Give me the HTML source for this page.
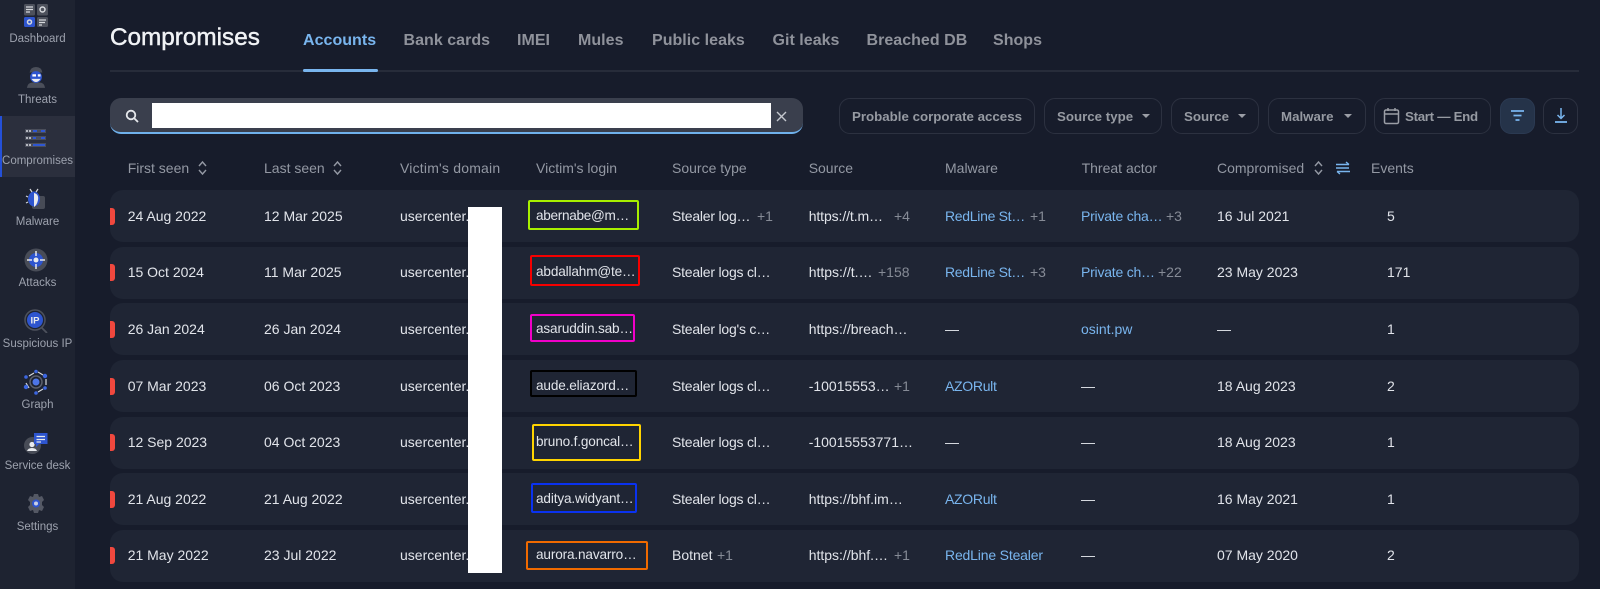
<!DOCTYPE html>
<html lang="en"><head><meta charset="utf-8"><title>Compromises</title>
<style>
*{box-sizing:border-box}
html,body{margin:0;padding:0;width:1600px;height:589px;overflow:hidden;background:#171c2b}
body{position:relative;font-family:"Liberation Sans",Arial,sans-serif;font-size:14px;color:#e1e4ea}
.a{position:absolute}
.t{position:absolute;white-space:nowrap;line-height:20px;height:20px}
#side{left:0;top:0;width:75px;height:589px;background:#1e2331}
#act{left:0;top:116px;width:75px;height:61px;background:#2b2f3d}
#actb{left:0;top:116px;width:2px;height:61px;background:#2450d8}
.l{position:absolute;left:0;width:75px;text-align:center;font-size:11.5px;line-height:14px;color:#9da2ae;white-space:nowrap}
.ic{position:absolute}
.tab{position:absolute;top:30.500px;line-height:20px;font-size:16px;font-weight:bold;letter-spacing:.03px;color:#8f929b;white-space:nowrap}
.btn{position:absolute;top:98px;height:36px;border:1px solid #2c3140;border-radius:11px}
.bt{position:absolute;top:106.500px;line-height:20px;font-size:13.3px;font-weight:bold;color:#969aa2;white-space:nowrap}
.car{position:absolute;top:114px;width:0;height:0;border-left:4px solid transparent;border-right:4px solid transparent;border-top:4px solid #9b9ea6}
.h{position:absolute;top:158px;line-height:20px;color:#9398a3;white-space:nowrap}
.row{position:absolute;left:110px;width:1469px;height:52px;background:#1f2534;border-radius:13px}
.mk{position:absolute;left:110px;width:4.5px;height:17px;background:#f0483e;border-radius:0 3px 3px 0}
.row span{position:absolute;top:15.500px;line-height:20px;white-space:nowrap}
.g{color:#868b96}.b{color:#79b5ee}
.n{letter-spacing:-.22px}.m{letter-spacing:-.3px}.li{font-size:13.600px;letter-spacing:-.15px}
.box{position:absolute;border:2.5px solid;border-radius:2px}
</style></head><body>

<div class="a" id="side"></div><div class="a" id="act"></div><div class="a" id="actb"></div>

<svg class="ic" style="left:23px;top:3px" width="26" height="25" viewBox="0 0 26 25"><rect x="1" y="1" width="11" height="11.500" rx="1.500" fill="#4d515c"/><rect x="14" y="1" width="11" height="11.500" rx="1.500" fill="#4d515c"/><rect x="1" y="14" width="11" height="10" rx="1.500" fill="#2e55cf"/><rect x="14" y="14" width="11" height="10" rx="1.500" fill="#4d515c"/><path d="M3 4h7M3 6.500h7M3 9h4M16 17h7M16 19.500h6M16 22h3" stroke="#d6d8dc" stroke-width="1.300"/><circle cx="19.500" cy="6.500" r="2.500" fill="none" stroke="#d6d8dc" stroke-width="1.500"/><circle cx="6.500" cy="19" r="2" fill="none" stroke="#d6d8dc" stroke-width="1.500"/></svg>
<div class="l" style="top:32px">Dashboard</div>

<svg class="ic" style="left:26px;top:66px" width="20" height="22" viewBox="0 0 22 24"><path d="M4 7Q5 1 11 1T18 7Z" fill="#4b4f5a"/><path d="M1 24Q2 18 7 18H15Q20 18 21 24Z" fill="#4b4f5a"/><circle cx="11" cy="12" r="6.500" fill="#2e55cf"/><path d="M6 14Q11 21 16 14Z" fill="#e8eaee"/><rect x="7" y="9" width="4" height="2.500" fill="#fff"/><rect x="13" y="9" width="3" height="2.500" fill="#fff"/></svg>
<div class="l" style="top:93px">Threats</div>

<svg class="ic" style="left:25px;top:128px" width="22" height="20" viewBox="0 0 22 20"><g fill="#4a4e5b"><rect x="0" y="1" width="21" height="4"/><rect x="0" y="8" width="21" height="4"/><rect x="0" y="15" width="21" height="4"/></g><g fill="#b4b7bf"><rect x="1" y="2" width="2" height="2"/><rect x="4" y="2" width="2" height="2"/><rect x="1" y="9" width="2" height="2"/><rect x="4" y="9" width="2" height="2"/><rect x="1" y="16" width="2" height="2"/><rect x="4" y="16" width="2" height="2"/></g><g fill="#2f57d2"><rect x="8" y="2" width="4" height="2"/><rect x="16" y="2" width="4" height="2"/><rect x="8" y="9" width="3" height="2"/><rect x="16" y="9" width="4" height="2"/><rect x="8" y="16" width="12" height="2"/></g></svg>
<div class="l" style="top:154px">Compromises</div>

<svg class="ic" style="left:25px;top:188px" width="24" height="24" viewBox="0 0 24 24"><rect x="7" y="8" width="13" height="13" rx="2" fill="#474b56"/><ellipse cx="9" cy="11" rx="6" ry="7.500" fill="#2e55cf"/><path d="M9 5Q14 6 13 12Q12 17 9 19Z" fill="#e8eaee"/><path d="M5 1L7 4M13 1L11 4M1 8L3 9M1 15L3 14" stroke="#d6d8dc" stroke-width="1.200"/></svg>
<div class="l" style="top:215px">Malware</div>

<svg class="ic" style="left:24px;top:248px" width="24" height="24" viewBox="0 0 24 24"><circle cx="12" cy="12" r="11.500" fill="#484c57"/><circle cx="12" cy="12" r="7" fill="#2e55cf"/><circle cx="12" cy="12" r="2.500" fill="#e8eaee"/><path d="M12 3V8M12 16V21M3 12H8M16 12H21" stroke="#e8eaee" stroke-width="1.500"/></svg>
<div class="l" style="top:276px">Attacks</div>

<svg class="ic" style="left:24px;top:309px" width="24" height="24" viewBox="0 0 24 24"><circle cx="11" cy="11" r="10" fill="none" stroke="#4d515c" stroke-width="1.500"/><circle cx="11" cy="11" r="8" fill="#2e55cf"/><path d="M17 18L23 24" stroke="#4d515c" stroke-width="1.800"/><text x="11" y="14.500" text-anchor="middle" font-family="Liberation Sans" font-weight="bold" font-size="9.500" fill="#e8eaee">IP</text></svg>
<div class="l" style="top:337px">Suspicious IP</div>

<svg class="ic" style="left:23px;top:369px" width="26" height="26" viewBox="0 0 26 26"><circle cx="13" cy="13" r="6" fill="none" stroke="#5b5f6b" stroke-width="1.500"/><circle cx="13" cy="13" r="3.500" fill="#4d75e8"/><path d="M6 7L11 4M15 3L20 6M23 10V16M20 20L15 23M6 19L3 14" stroke="#d6d8dc" stroke-width="1.200"/><g fill="#3c66e0"><circle cx="13" cy="2.500" r="1.800"/><circle cx="22" cy="7" r="2.200"/><circle cx="22" cy="19" r="1.800"/><circle cx="13" cy="24" r="1.800"/><circle cx="3" cy="18" r="2.200"/><circle cx="3" cy="8" r="1.800"/></g></svg>
<div class="l" style="top:398px">Graph</div>

<svg class="ic" style="left:24px;top:433px" width="24" height="21" viewBox="0 0 24 21"><circle cx="8.500" cy="12.500" r="8.500" fill="#484c57"/><circle cx="8" cy="11.500" r="2.600" fill="#e8eaee"/><path d="M3 18Q4 15 8 15T13 18Z" fill="#e8eaee"/><path d="M10 0H23.500V11H15L12 14V11H10Z" fill="#2e55cf"/><path d="M12.500 3.500H21M12.500 6.500H21M12.500 9H17" stroke="#e8eaee" stroke-width="1.200"/></svg>
<div class="l" style="top:459px">Service desk</div>

<svg class="ic" style="left:26px;top:493px" width="20" height="21" viewBox="0 0 20 21"><path d="M8 1H12L13 4L16 3L18 7L16 9V12L18 14L16 18L13 17L12 20H8L7 17L4 18L2 14L4 12V9L2 7L4 3L7 4Z" fill="#545864"/><circle cx="10" cy="10.500" r="4" fill="#2e55cf"/><circle cx="10" cy="10.500" r="2" fill="#c9cfe6"/></svg>
<div class="l" style="top:520px">Settings</div>

<div class="t" style="left:110px;top:26px;height:24px;line-height:24px;font-size:24.300px;color:#f0f2f5;-webkit-text-stroke:.45px #f0f2f5">Compromises</div>
<div class="a" style="left:110px;top:70px;width:1469px;height:2px;background:#272c3a"></div>
<div class="tab" style="left:303px;color:#79b5ee">Accounts</div>
<div class="a" style="left:303px;top:69px;width:75px;height:3px;background:#79b5ee;border-radius:2px"></div>
<div class="tab" style="left:403.500px">Bank cards</div>
<div class="tab" style="left:517px">IMEI</div>
<div class="tab" style="left:578px">Mules</div>
<div class="tab" style="left:652px">Public leaks</div>
<div class="tab" style="left:772.500px">Git leaks</div>
<div class="tab" style="left:866.500px">Breached DB</div>
<div class="tab" style="left:993px">Shops</div>

<div class="a" style="left:110px;top:98px;width:693px;height:36px;background:#3a3f4d;border-radius:11px;border-bottom:2.500px solid #6fb1ec"></div>
<div class="a" style="left:152px;top:103px;width:619px;height:25px;background:#fff"></div>
<svg class="ic" style="left:125px;top:109px" width="14" height="14" viewBox="0 0 14 14"><circle cx="6" cy="6" r="4.300" fill="none" stroke="#e6e8ec" stroke-width="1.800"/><path d="M9.200 9.200L13 13" stroke="#e6e8ec" stroke-width="1.800"/></svg>
<svg class="ic" style="left:776px;top:111px" width="11" height="11" viewBox="0 0 11 11"><path d="M1 1L10 10M10 1L1 10" stroke="#c4c7ce" stroke-width="1.400"/></svg>

<div class="btn" style="left:839px;width:196px"></div><div class="bt" style="left:852px">Probable corporate access</div>
<div class="btn" style="left:1044px;width:118px"></div><div class="bt" style="left:1057px">Source type</div><div class="car" style="left:1142px"></div>
<div class="btn" style="left:1171px;width:88px"></div><div class="bt" style="left:1184px">Source</div><div class="car" style="left:1238px"></div>
<div class="btn" style="left:1268px;width:98px"></div><div class="bt" style="left:1281px">Malware</div><div class="car" style="left:1344px"></div>
<div class="btn" style="left:1374px;width:117px"></div>
<svg class="ic" style="left:1383px;top:107px" width="17" height="18" viewBox="0 0 17 18"><rect x="1.500" y="3" width="14" height="13.500" rx="1.500" fill="none" stroke="#9b9ea6" stroke-width="1.500"/><path d="M1.500 7H15.500M5 1V4M12 1V4" stroke="#9b9ea6" stroke-width="1.500"/></svg>
<div class="bt" style="left:1405px;letter-spacing:-.3px">Start — End</div>
<div class="btn" style="left:1500px;width:35px;background:#253349;border-color:#2b3a52"></div>
<svg class="ic" style="left:1510px;top:109px" width="15" height="13" viewBox="0 0 15 13"><path d="M1 2H14M3.500 6.500H11.500M5.500 11H9.500" stroke="#79b5ee" stroke-width="1.800"/></svg>
<div class="btn" style="left:1543px;width:35px"></div>
<svg class="ic" style="left:1554px;top:107px" width="14" height="17" viewBox="0 0 14 17"><path d="M7 1V11M3.500 8L7 11.500L10.500 8" fill="none" stroke="#79b5ee" stroke-width="1.500"/><path d="M1 15H13" stroke="#79b5ee" stroke-width="1.800"/></svg>

<div class="h" style="left:127.700px">First seen</div>
<svg class="ic" style="left:198px;top:160px" width="9" height="16" viewBox="0 0 9 16"><path d="M1 6L4.500 2L8 6M1 10L4.500 14L8 10" fill="none" stroke="#9398a3" stroke-width="1.400"/></svg>
<div class="h" style="left:264px">Last seen</div>
<svg class="ic" style="left:333px;top:160px" width="9" height="16" viewBox="0 0 9 16"><path d="M1 6L4.500 2L8 6M1 10L4.500 14L8 10" fill="none" stroke="#9398a3" stroke-width="1.400"/></svg>
<div class="h" style="left:400px;letter-spacing:.2px">Victim's domain</div>
<div class="h" style="left:536px">Victim's login</div>
<div class="h" style="left:672px">Source type</div>
<div class="h" style="left:808.700px">Source</div>
<div class="h" style="left:945px">Malware</div>
<div class="h" style="left:1081.600px">Threat actor</div>
<div class="h" style="left:1217px">Compromised</div>
<svg class="ic" style="left:1314px;top:160px" width="9" height="16" viewBox="0 0 9 16"><path d="M1 6L4.500 2L8 6M1 10L4.500 14L8 10" fill="none" stroke="#9398a3" stroke-width="1.400"/></svg>
<svg class="ic" style="left:1336px;top:161px" width="14" height="14" viewBox="0 0 14 14"><path d="M0 3.500H13M0 7H13M1 10.500H14M10 1L13 3.500M4 13L1 10.500" fill="none" stroke="#79b5ee" stroke-width="1.400"/></svg>
<div class="h" style="left:1371px">Events</div>

<div class="row" style="top:190px"><span style="left:17.700px">24 Aug 2022</span><span style="left:154px">12 Mar 2025</span><span style="left:290px">usercenter.</span><span class="li" style="left:426px;letter-spacing:-.3px">abernabe@m…</span><span class="n" style="left:562px">Stealer log…</span><span class="g" style="left:647px">+1</span><span style="left:698.700px;letter-spacing:-.1px">https://t.m…</span><span class="g" style="left:784px">+4</span><span class="b m" style="left:835px">RedLine St…</span><span class="g" style="left:920px">+1</span><span class="b n" style="left:971px">Private cha…</span><span class="g" style="left:1056px">+3</span><span style="left:1107px">16 Jul 2021</span><span style="left:1277px">5</span></div>
<div class="row" style="top:246.700px"><span style="left:17.700px">15 Oct 2024</span><span style="left:154px">11 Mar 2025</span><span style="left:290px">usercenter.</span><span class="li" style="left:426px">abdallahm@te…</span><span class="n" style="left:562px">Stealer logs cl…</span><span style="left:698.700px">https://t.…</span><span class="g" style="left:768px">+158</span><span class="b m" style="left:835px">RedLine St…</span><span class="g" style="left:920px">+3</span><span class="b n" style="left:971px">Private ch…</span><span class="g" style="left:1048px">+22</span><span style="left:1107px">23 May 2023</span><span style="left:1277px">171</span></div>
<div class="row" style="top:303.300px"><span style="left:17.700px">26 Jan 2024</span><span style="left:154px">26 Jan 2024</span><span style="left:290px">usercenter.</span><span class="li" style="left:426px">asaruddin.sab…</span><span class="n" style="left:562px">Stealer log's c…</span><span style="left:698.700px">https://breach…</span><span style="left:835px">—</span><span class="b" style="left:971px">osint.pw</span><span style="left:1107px">—</span><span style="left:1277px">1</span></div>
<div class="row" style="top:360px"><span style="left:17.700px">07 Mar 2023</span><span style="left:154px">06 Oct 2023</span><span style="left:290px">usercenter.</span><span class="li" style="left:426px">aude.eliazord…</span><span class="n" style="left:562px">Stealer logs cl…</span><span style="left:698.700px">-10015553…</span><span class="g" style="left:784px">+1</span><span class="b m" style="left:835px">AZORult</span><span style="left:971px">—</span><span style="left:1107px">18 Aug 2023</span><span style="left:1277px">2</span></div>
<div class="row" style="top:416.500px"><span style="left:17.700px">12 Sep 2023</span><span style="left:154px">04 Oct 2023</span><span style="left:290px">usercenter.</span><span class="li" style="left:426px">bruno.f.goncal…</span><span class="n" style="left:562px">Stealer logs cl…</span><span style="left:698.700px">-10015553771…</span><span style="left:835px">—</span><span style="left:971px">—</span><span style="left:1107px">18 Aug 2023</span><span style="left:1277px">1</span></div>
<div class="row" style="top:473px"><span style="left:17.700px">21 Aug 2022</span><span style="left:154px">21 Aug 2022</span><span style="left:290px">usercenter.</span><span class="li" style="left:426px">aditya.widyant…</span><span class="n" style="left:562px">Stealer logs cl…</span><span style="left:698.700px">https://bhf.im…</span><span class="b m" style="left:835px">AZORult</span><span style="left:971px">—</span><span style="left:1107px">16 May 2021</span><span style="left:1277px">1</span></div>
<div class="row" style="top:529.700px"><span style="left:17.700px">21 May 2022</span><span style="left:154px">23 Jul 2022</span><span style="left:290px">usercenter.</span><span class="li" style="left:426px">aurora.navarro…</span><span style="left:562px">Botnet</span><span class="g" style="left:607px">+1</span><span style="left:698.700px">https://bhf.…</span><span class="g" style="left:784px">+1</span><span class="b" style="left:835px;letter-spacing:-.17px">RedLine Stealer</span><span style="left:971px">—</span><span style="left:1107px">07 May 2020</span><span style="left:1277px">2</span></div>

<div class="mk" style="top:207.500px"></div><div class="mk" style="top:264.200px"></div><div class="mk" style="top:320.800px"></div><div class="mk" style="top:377.500px"></div><div class="mk" style="top:434px"></div><div class="mk" style="top:490.500px"></div><div class="mk" style="top:547.200px"></div>

<div class="box" style="left:528.300px;top:200px;width:110.700px;height:30px;border-color:#a8f000"></div>
<div class="box" style="left:530px;top:255.300px;width:110px;height:30.700px;border-color:#f50000"></div>
<div class="box" style="left:530px;top:314px;width:105.300px;height:27.700px;border-color:#f000c8"></div>
<div class="box" style="left:530px;top:370px;width:106.700px;height:27px;border-color:#000"></div>
<div class="box" style="left:531.700px;top:424px;width:109.300px;height:37px;border-color:#ffd400"></div>
<div class="box" style="left:531px;top:482.700px;width:105.700px;height:30px;border-color:#0a32f0"></div>
<div class="box" style="left:525.700px;top:540.700px;width:122px;height:29px;border-color:#f06a00"></div>

<div class="a" style="left:468px;top:206.700px;width:34px;height:366.300px;background:#fff"></div>
</body></html>
